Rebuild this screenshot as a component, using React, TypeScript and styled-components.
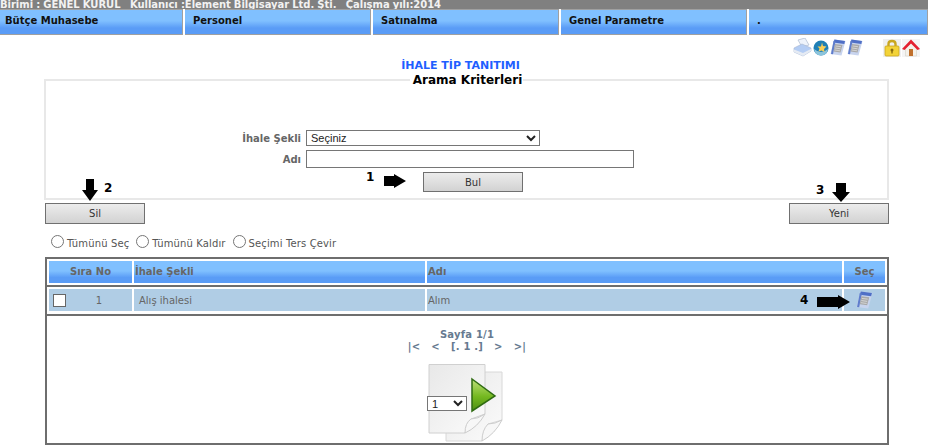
import styled, { createGlobalStyle } from 'styled-components';

const GlobalStyle = createGlobalStyle`
    html, body {
        margin: 0;
        padding: 0;
        background: #fff;
        font-family: "DejaVu Sans", Verdana, sans-serif;
        font-size: 10px;
        overflow: hidden;
    }
`

const Page = styled.div`
    position: relative;
    width: 928px;
    height: 445px;
    overflow: hidden;
`

const StatusBar = styled.div`
    height: 9px;
    background: #808080;
    color: #f2f2f2;
    font-size: 10px;
    font-weight: bold;
    line-height: 11px;
    letter-spacing: -0.04px;
    word-spacing: -0.3px;
    white-space: pre;
    overflow: hidden;

    span {
        display: block;
        margin-top: -1px;
    }
`

const Menu = styled.div`
    display: grid;
    grid-template-columns: 183px 186px 186px 186px 1fr;
    gap: 2px;
    height: 26px;
    background: #fff;
`

const MenuItem = styled.div`
    box-sizing: border-box;
    padding: 5px 0 0 8px;
    font-size: 10px;
    font-weight: bold;
    color: #111;
    background: linear-gradient(#80c0ff 0%, #80c0ff 45%, #5a9cf6 75%, #5a9cf6 100%);
    border-top: 1px solid #a0a0a0;
    border-bottom: 1px solid #a0a0a0;
    border-right: 1px solid #a0a0a0;

    &:first-child {
        padding-left: 5px;
    }
`

const IconBar = styled.div`
    display: flex;
    justify-content: flex-end;
    align-items: center;
    height: 25px;
    padding-right: 8px;
`

const IconGroup = styled.div`
    display: flex;
    align-items: center;
    gap: 1px;
    margin-left: 20px;
`

const PageTitle = styled.div`
    height: 12px;
    line-height: 12px;
    padding-right: 7px;
    text-align: center;
    color: #1f5fff;
    font-size: 11px;
    font-weight: bold;
`

const SearchPanel = styled.fieldset`
    box-sizing: border-box;
    margin: 1px 39px 0 44px;
    padding: 0;
    height: 127px;
    border: 2px solid #e8e8e8;
    min-inline-size: 0;
`

const PanelTitle = styled.legend`
    margin: 0 auto;
    padding: 0 1px 0 3px;
    font-size: 12px;
    font-weight: bold;
    color: #000;
    line-height: 14px;
`

const FormGrid = styled.div`
    display: grid;
    grid-template-columns: 255px 1fr;
    column-gap: 5px;
    row-gap: 4px;
    padding-top: 43px;
`

const FieldLabel = styled.label`
    text-align: right;
    align-self: center;
    font-weight: bold;
    color: #666;
    font-size: 10px;
`

const SelectBox = styled.select<{ $width: number; $height: number }>`
    box-sizing: border-box;
    display: block;
    width: ${p => p.$width}px;
    height: ${p => p.$height}px;
    padding: 0;
    border: 1px solid #767676;
    background: #fff;
    font-family: "Liberation Sans", Arial, sans-serif;
    font-size: 11px;
    color: #222;
    border-radius: 0;
`

const TextBox = styled.input`
    box-sizing: border-box;
    display: block;
    width: 328px;
    height: 18px;
    border: 1px solid #767676;
    padding: 0;
`

const ActionButton = styled.button<{ $height: number }>`
    box-sizing: border-box;
    display: block;
    width: 100px;
    height: ${p => p.$height}px;
    padding: 0;
    border: 1px solid #707070;
    background: linear-gradient(#ececec, #d2d2d2);
    color: #333;
    font-family: "DejaVu Sans", sans-serif;
    font-size: 10px;
`

const SearchButtonRow = styled.div`
    display: flex;
    justify-content: flex-start;
    padding: 4px 0 0 377px;
`

const ButtonRow = styled.div`
    display: flex;
    justify-content: space-between;
    padding: 3px 39px 0 45px;
`

const RadioRow = styled.div`
    display: flex;
    align-items: center;
    gap: 7px;
    height: 18px;
    margin-top: 10px;
    padding-left: 51px;
    color: #555;
    font-size: 10px;
    letter-spacing: 0.13px;
`

const RadioLabel = styled.label`
    display: flex;
    align-items: center;
    gap: 3px;
`

const RadioDot = styled.input`
    appearance: none;
    box-sizing: border-box;
    width: 13px;
    height: 13px;
    margin: 0 0 3px;
    border: 1px solid #767676;
    border-radius: 50%;
    background: #fff;
`

const TableBox = styled.div`
    box-sizing: border-box;
    margin: 5px 39px 0 45px;
    height: 188px;
    border: 2px solid #6e6e6e;
    overflow: hidden;
`

const TableRow = styled.div<{ $head?: boolean }>`
    display: grid;
    grid-template-columns: 83px 291px 415px 41px;
    column-gap: 2px;
    padding: ${p => (p.$head ? '2px' : '2px 2px 3px')};
    border-bottom: 2px solid #6e6e6e;
`

const HeadCell = styled.div<{ $center?: boolean }>`
    height: 22px;
    line-height: 22px;
    padding-left: ${p => (p.$center ? 0 : 1)}px;
    text-align: ${p => (p.$center ? 'center' : 'left')};
    font-size: 10px;
    font-weight: bold;
    color: #666;
    background: linear-gradient(#80c0ff 0%, #80c0ff 45%, #5a9cf6 75%, #5a9cf6 100%);
`

const BodyCell = styled.div<{ $indent?: number; $center?: boolean }>`
    display: flex;
    align-items: center;
    justify-content: ${p => (p.$center ? 'center' : 'flex-start')};
    height: 22px;
    padding-left: ${p => p.$indent ?? 0}px;
    font-size: 10px;
    color: #666;
    background: #b0cde5;
`

const RowNumber = styled.span`
    width: 69px;
    text-align: center;
`

const CheckBox = styled.span`
    box-sizing: border-box;
    flex: none;
    width: 13px;
    height: 13px;
    border: 1px solid #666;
    background: #fff;
`

const Pager = styled.div`
    display: flex;
    flex-direction: column;
    align-items: center;
    padding-top: 13px;
    color: #667a90;
    font-size: 10px;
    font-weight: bold;
    line-height: 12px;
    letter-spacing: 0.2px;
`

const PagerLinks = styled.div`
    white-space: pre;
`

const PagerArt = styled.div`
    position: relative;
    width: 76px;
    height: 78px;
    margin: 11px 4px 0 0;
`

const PagerSelect = styled(SelectBox)`
    position: absolute;
    left: 0;
    top: 32px;
`

const Note = styled.div<{ $x: number; $y: number }>`
    position: absolute;
    left: ${p => p.$x}px;
    top: ${p => p.$y}px;
    font-size: 12px;
    font-weight: bold;
    line-height: 14px;
    color: #000;
`

const ArrowMark = styled.svg<{ $x: number; $y: number }>`
    position: absolute;
    left: ${p => p.$x}px;
    top: ${p => p.$y}px;
`

function DownArrow({ x, y, w, h }: { x: number; y: number; w: number; h: number }) {
    const shaft = Math.round(w * 0.24);
    const neck = Math.round(h * 0.48);
    return (
        <ArrowMark $x={x} $y={y} width={w} height={h} viewBox={`0 0 ${w} ${h}`}>
            <path d={`M${shaft} 0H${w - shaft}V${neck}H${w}L${w / 2} ${h}L0 ${neck}H${shaft}Z`} fill="#000" />
        </ArrowMark>
    );
}

function RightArrow({ x, y, width }: { x: number; y: number; width: number }) {
    return (
        <ArrowMark $x={x} $y={y} width={width} height="14" viewBox={`0 0 ${width} 14`}>
            <path d={`M0 2H${width - 12}V0L${width} 7L${width - 12} 14V12H0Z`} fill="#000" />
        </ArrowMark>
    );
}

function PrinterIcon() {
    return (
        <svg width="19" height="19" viewBox="0 0 19 19">
            <path d="M5 2L12 0L16 7L9 9Z" fill="#eef3fb" stroke="#aebad0" strokeWidth="0.7" />
            <path d="M1 10L9 6L18 10V13L10 18L1 14Z" fill="#b4cdf4" stroke="#a6b6d0" strokeWidth="0.6" />
            <path d="M1 11.500L10 15L18 11V13L10 18L1 14Z" fill="#e6ebf3" />
        </svg>
    );
}

function GlobeIcon() {
    return (
        <svg width="16" height="16" viewBox="0 0 16 16">
            <circle cx="8" cy="8" r="7.500" fill="#1f7fb5" />
            <path d="M1 9Q8 15 15 9Q14 15.500 8 15.500Q2 15.500 1 9Z" fill="#8cc4dc" />
            <path d="M9 2.500L10 6L13.500 6.500L11 9L11.500 12L8.500 10.500L5.500 11.500L6.500 8.500L4.500 6.500H8Z" fill="#f8cf57" />
        </svg>
    );
}

function CardIcon({ width = 16, height = 17 }: { width?: number; height?: number }) {
    return (
        <svg width={width} height={height} viewBox="0 0 16 17">
            <path d="M4 0.500L15.500 2L11.500 16.500L0.500 15Z" fill="#c8d4ee" />
            <path d="M4.500 0.500L15 2L14.300 5L3.500 3.500Z" fill="#4f6fc6" />
            <path d="M3.500 2L1 15L3 15.300L5.500 2.500Z" fill="#5f7dcc" />
            <path d="M5 5L12.500 6L10.500 13.500L3.500 12.500Z" fill="#a9a9a9" />
            <path d="M5.500 7L11 7.700M5 9L10.500 9.800M4.500 11L10 11.800" stroke="#dddddd" strokeWidth="0.8" />
        </svg>
    );
}

function LockIcon() {
    return (
        <svg width="18" height="18" viewBox="0 0 18 18">
            <rect width="18" height="18" fill="#efefef" />
            <path d="M5.500 8V5Q5.500 2 9 2Q12.500 2 12.500 5V8" fill="none" stroke="#c9a61e" strokeWidth="2.400" />
            <rect x="2" y="7" width="14" height="10" rx="1" fill="#f3d338" stroke="#c9a61e" strokeWidth="0.8" />
            <circle cx="9" cy="11" r="1.500" fill="#8a6d10" />
            <rect x="8.300" y="11" width="1.400" height="3.500" fill="#8a6d10" />
        </svg>
    );
}

function HomeIcon() {
    return (
        <svg width="18" height="18" viewBox="0 0 18 18">
            <rect width="18" height="18" fill="#f4f4f4" />
            <path d="M3.500 9V17H14.500V9L9 4Z" fill="#f4f1ea" stroke="#cfcabd" strokeWidth="0.5" />
            <path d="M0 10L9 0.500L18 10L15.500 11L9 4.500L2.500 11Z" fill="#e4202f" />
            <rect x="7" y="10" width="4" height="7" fill="#c0702c" />
        </svg>
    );
}

function PagesArt() {
    return (
        <svg width="76" height="78" viewBox="0 0 76 78" style={{ display: 'block' }}>
            <defs>
                <linearGradient id="sheet" x1="0" y1="0" x2="1" y2="1">
                    <stop offset="0" stopColor="#e8e8e8" />
                    <stop offset="1" stopColor="#fbfbfb" />
                </linearGradient>
                <linearGradient id="play" x1="0" y1="0" x2="0" y2="1">
                    <stop offset="0" stopColor="#bfe07a" />
                    <stop offset="0.55" stopColor="#74b820" />
                    <stop offset="1" stopColor="#4d8f12" />
                </linearGradient>
            </defs>
            <path d="M19 8H75V56L61 60L55 77H19Z" fill="url(#sheet)" stroke="#d8d8d8" />
            <path d="M2 0.500H58V50L44 55L38 69H2Z" fill="url(#sheet)" stroke="#d0d0d0" />
            <path d="M38 69Q38 59 44 55Q51 55 58 50Q51 63 38 69Z" fill="#f7f7f7" stroke="#cccccc" />
            <path d="M55 77Q55 66 61 60Q68 60 75 56Q68 70 55 77Z" fill="#f7f7f7" stroke="#cccccc" />
            <path d="M45 15L68 32L45 47Z" fill="url(#play)" stroke="#2f6b12" strokeWidth="1.500" />
        </svg>
    );
}

function App() {
    return (
        <Page>
            <GlobalStyle />
            <StatusBar>
                <span>Birimi : GENEL KURUL   Kullanıcı :Element Bilgisayar Ltd. Şti.   Çalışma yılı:2014</span>
            </StatusBar>
            <Menu>
                <MenuItem>Bütçe Muhasebe</MenuItem>
                <MenuItem>Personel</MenuItem>
                <MenuItem>Satınalma</MenuItem>
                <MenuItem>Genel Parametre</MenuItem>
                <MenuItem>.</MenuItem>
            </Menu>
            <IconBar>
                <IconGroup>
                    <PrinterIcon />
                    <GlobeIcon />
                    <CardIcon />
                    <CardIcon />
                </IconGroup>
                <IconGroup>
                    <LockIcon />
                    <HomeIcon />
                </IconGroup>
            </IconBar>
            <PageTitle>İHALE TİP TANITIMI</PageTitle>
            <SearchPanel>
                <PanelTitle>Arama Kriterleri</PanelTitle>
                <FormGrid>
                    <FieldLabel>İhale Şekli</FieldLabel>
                    <div>
                        <SelectBox $width={234} $height={16}>
                            <option>Seçiniz</option>
                        </SelectBox>
                    </div>
                    <FieldLabel>Adı</FieldLabel>
                    <div>
                        <TextBox />
                    </div>
                </FormGrid>
                <SearchButtonRow>
                    <ActionButton $height={20}>Bul</ActionButton>
                </SearchButtonRow>
            </SearchPanel>
            <ButtonRow>
                <ActionButton $height={21}>Sil</ActionButton>
                <ActionButton $height={21}>Yeni</ActionButton>
            </ButtonRow>
            <RadioRow>
                <RadioLabel><RadioDot type="radio" />Tümünü Seç</RadioLabel>
                <RadioLabel><RadioDot type="radio" />Tümünü Kaldır</RadioLabel>
                <RadioLabel><RadioDot type="radio" />Seçimi Ters Çevir</RadioLabel>
            </RadioRow>
            <TableBox>
                <TableRow $head>
                    <HeadCell $center>Sıra No</HeadCell>
                    <HeadCell>İhale Şekli</HeadCell>
                    <HeadCell>Adı</HeadCell>
                    <HeadCell $center>Seç</HeadCell>
                </TableRow>
                <TableRow>
                    <BodyCell $indent={4}>
                        <CheckBox />
                        <RowNumber>1</RowNumber>
                    </BodyCell>
                    <BodyCell $indent={5}>Alış ihalesi</BodyCell>
                    <BodyCell $indent={1}>Alım</BodyCell>
                    <BodyCell $center><CardIcon width={17} height={18} /></BodyCell>
                </TableRow>
                <Pager>
                    <div>Sayfa 1/1</div>
                    <PagerLinks>{'|<   <   [. 1 .]   >   >|'}</PagerLinks>
                    <PagerArt>
                        <PagesArt />
                        <PagerSelect $width={40} $height={15}>
                            <option>1</option>
                        </PagerSelect>
                    </PagerArt>
                </Pager>
            </TableBox>

            <Note $x={366} $y={170}>1</Note>
            <RightArrow x={384} y={174} width={22} />
            <DownArrow x={82} y={179} w={16} h={22} />
            <Note $x={104} $y={181}>2</Note>
            <Note $x={816} $y={183}>3</Note>
            <DownArrow x={832} y={183} w={18} h={19} />
            <Note $x={800} $y={293}>4</Note>
            <RightArrow x={817} y={295} width={33} />
        </Page>
    );
}

export default App;
